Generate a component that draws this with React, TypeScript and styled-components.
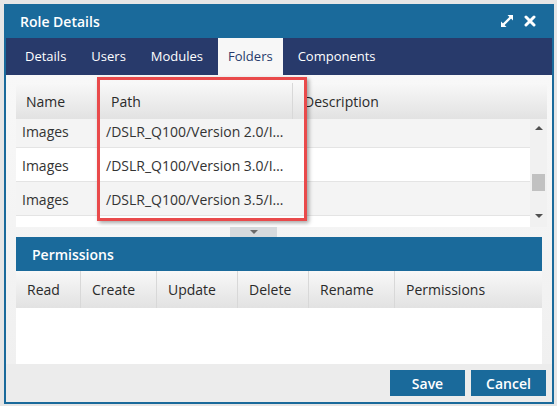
import styled, { createGlobalStyle } from "styled-components";

const GlobalStyle = createGlobalStyle`
  html, body {
    margin: 0;
    padding: 0;
    background: #e6e6e6;
    font-family: "Open Sans", "Liberation Sans", sans-serif;
  }
  * {
    box-sizing: border-box;
  }
`;

const BLUE = "#1a6a9b";
const NAVY = "#283a6b";

const tabs = ["Details", "Users", "Modules", "Folders", "Components"];

const folders = [
  { name: "Images", path: "/DSLR_Q100/Version 2.0/Images", description: "" },
  { name: "Images", path: "/DSLR_Q100/Version 3.0/Images", description: "" },
  { name: "Images", path: "/DSLR_Q100/Version 3.5/Images", description: "" },
  { name: "Images", path: "/DSLR_Q100/Version 4.0/Images", description: "" },
];

const permissionCols = [
  { label: "Read", width: 65 },
  { label: "Create", width: 76 },
  { label: "Update", width: 81 },
  { label: "Delete", width: 71 },
  { label: "Rename", width: 86 },
  { label: "Permissions" },
];

function ExpandIcon() {
  return (
    <svg width="14" height="14" viewBox="0 0 14 14">
      <polygon points="7.5,1 13,1 13,6.5" fill="#fff" />
      <polygon points="1,7.5 1,13 6.5,13" fill="#fff" />
      <line x1="3.5" y1="10.5" x2="10.5" y2="3.5" stroke="#fff" strokeWidth="2.4" />
    </svg>
  );
}

function CloseIcon() {
  return (
    <svg width="12" height="12" viewBox="0 0 12 12">
      <path d="M2 2 L10 10 M10 2 L2 10" stroke="#fff" strokeWidth="3" strokeLinecap="round" />
    </svg>
  );
}

export default function App() {
  return (
    <Page>
      <GlobalStyle />
      <Dialog>
        <TitleBar>
          <Title>Role Details</Title>
          <TitleIcons>
            <ExpandIcon />
            <CloseIcon />
          </TitleIcons>
        </TitleBar>

        <TabBar>
          {tabs.map((t) => (
            <Tab key={t} $active={t === "Folders"}>
              {t}
            </Tab>
          ))}
        </TabBar>

        <TabPanel>
          <FolderTable>
            <HeadRow $height={36}>
              <HeadCell $width={84}>Name</HeadCell>
              <HeadCell $width={193} $pad={11}>Path</HeadCell>
              <HeadCell $last $pad={11}>Description</HeadCell>
            </HeadRow>
            <ScrollBody>
              <Rows>
                <RowList>
                  {folders.map((f, i) => (
                    <Row key={i} $alt={i % 2 === 0}>
                      <Cell $width={84}>{f.name}</Cell>
                      <Cell $width={193}>{f.path}</Cell>
                      <Cell $last>{f.description}</Cell>
                    </Row>
                  ))}
                </RowList>
              </Rows>
              <ScrollTrack>
                <Arrow $up />
                <Thumb />
                <Arrow />
              </ScrollTrack>
            </ScrollBody>
          </FolderTable>

          <Splitter>
            <SplitHandle>
              <Arrow $dark />
            </SplitHandle>
          </Splitter>

          <PermissionsPanel>
            <PanelHeader>Permissions</PanelHeader>
            <HeadRow $height={37}>
              {permissionCols.map((c) => (
                <HeadCell key={c.label} $width={c.width} $last={!c.width} $pad={11}>
                  {c.label}
                </HeadCell>
              ))}
            </HeadRow>
            <PanelBody />
          </PermissionsPanel>
        </TabPanel>

        <Footer>
          <Button>Save</Button>
          <Button>Cancel</Button>
        </Footer>

        {/* annotation box drawn over the Path column */}
        <Highlight />
      </Dialog>
    </Page>
  );
}

const Page = styled.div`
  width: 557px;
  height: 406px;
  padding: 4px 0 0 4px;
  overflow: hidden;
`;

const Dialog = styled.div`
  position: relative;
  width: 550px;
  height: 400px;
  border: 2px solid ${BLUE};
  border-top: none;
  display: flex;
  flex-direction: column;
  background: #f3f3f3;
`;

const TitleBar = styled.div`
  height: 34px;
  margin: 0 -2px;
  padding: 0 18px 0 16px;
  background: ${BLUE};
  display: flex;
  align-items: center;
  justify-content: space-between;
`;

const Title = styled.div`
  color: #fff;
  font-size: 14px;
  font-weight: 600;
`;

const TitleIcons = styled.div`
  display: flex;
  align-items: center;
  gap: 10px;
`;

const TabBar = styled.div`
  height: 37px;
  background: ${NAVY};
  display: flex;
  padding-left: 9px;
  gap: 5px;
`;

const Tab = styled.div<{ $active?: boolean }>`
  padding: 0 10px;
  line-height: 37px;
  font-size: 13px;
  color: ${(p) => (p.$active ? NAVY : "#fff")};
  background: ${(p) => (p.$active ? "#f7f7f7" : "transparent")};
`;

const TabPanel = styled.div`
  flex: 1;
  display: flex;
  flex-direction: column;
  padding: 8px 5px 0 10px;
  background: linear-gradient(#f8f8f8, #f0f0f0);
`;

const FolderTable = styled.div`
  display: flex;
  flex-direction: column;
`;

const HeadRow = styled.div<{ $height: number }>`
  height: ${(p) => p.$height}px;
  display: flex;
  background: linear-gradient(#f8f8f8, #e2e2e2);
  flex-shrink: 0;
`;

const HeadCell = styled.div<{ $width?: number; $last?: boolean; $pad?: number }>`
  ${(p) => (p.$last ? "flex: 1;" : `width: ${p.$width}px;`)}
  padding-left: ${(p) => p.$pad ?? 10}px;
  display: flex;
  align-items: center;
  font-size: 14px;
  color: #2a2a2a;
  border-right: ${(p) => (p.$last ? "none" : "1px solid #d8d8d8")};
`;

const ScrollBody = styled.div`
  height: 108px;
  display: flex;
`;

const Rows = styled.div`
  flex: 1;
  overflow: hidden;
  background: #fff;
`;

const RowList = styled.div`
  margin-top: -5px;
`;

const Row = styled.div<{ $alt?: boolean }>`
  height: 34px;
  display: flex;
  background: ${(p) => (p.$alt ? "#f4f4f4" : "#fff")};
  border-bottom: 1px solid #e4e4e4;
`;

const Cell = styled.div<{ $width?: number; $last?: boolean }>`
  ${(p) => (p.$last ? "flex: 1;" : `width: ${p.$width}px;`)}
  padding: 1px 9px 0 6px;
  line-height: 33px;
  font-size: 14px;
  color: #333;
  white-space: nowrap;
  overflow: hidden;
  text-overflow: ellipsis;
`;

const ScrollTrack = styled.div`
  width: 17px;
  background: #f1f1f1;
  display: flex;
  flex-direction: column;
  align-items: center;
  padding: 7px 0 9px;
`;

const Arrow = styled.div<{ $up?: boolean; $dark?: boolean }>`
  width: 0;
  height: 0;
  border-left: 4px solid transparent;
  border-right: 4px solid transparent;
  ${(p) =>
    p.$up
      ? "border-bottom: 4px solid #505050;"
      : `border-top: 4px solid ${p.$dark ? "#6a6a6a" : "#505050"};`}
  ${(p) => (!p.$up && !p.$dark ? "margin-top: auto;" : "")}
`;

const Thumb = styled.div`
  width: 13px;
  height: 17px;
  margin-top: 44px;
  background: #c1c1c1;
`;

const Splitter = styled.div`
  height: 10px;
  display: flex;
`;

const SplitHandle = styled.div`
  width: 47px;
  margin-left: 214px;
  background: #d6dadd;
  display: flex;
  justify-content: center;
  padding-top: 3px;
`;

const PermissionsPanel = styled.div`
  flex: 1;
  margin-right: 5px;
  display: flex;
  flex-direction: column;
`;

const PanelHeader = styled.div`
  height: 34px;
  padding-left: 16px;
  display: flex;
  align-items: center;
  background: ${BLUE};
  color: #fff;
  font-size: 14px;
  font-weight: 600;
`;

const PanelBody = styled.div`
  flex: 1;
  background: #fff;
`;

const Footer = styled.div`
  height: 38px;
  background: #ececec;
  display: flex;
  justify-content: flex-end;
  align-items: flex-start;
  gap: 6px;
  padding: 6px 6px 0 0;
`;

const Button = styled.button`
  width: 75px;
  height: 26px;
  border: none;
  background: ${BLUE};
  color: #fff;
  font-family: "Open Sans", "Liberation Sans", sans-serif;
  font-size: 14px;
  font-weight: 600;
  cursor: pointer;
`;

const Highlight = styled.div`
  position: absolute;
  left: 91px;
  top: 73px;
  width: 210px;
  height: 144px;
  border: 3px solid #e94a4b;
  box-shadow: 2px 2px 4px rgba(0, 0, 0, 0.35);
  pointer-events: none;
`;
